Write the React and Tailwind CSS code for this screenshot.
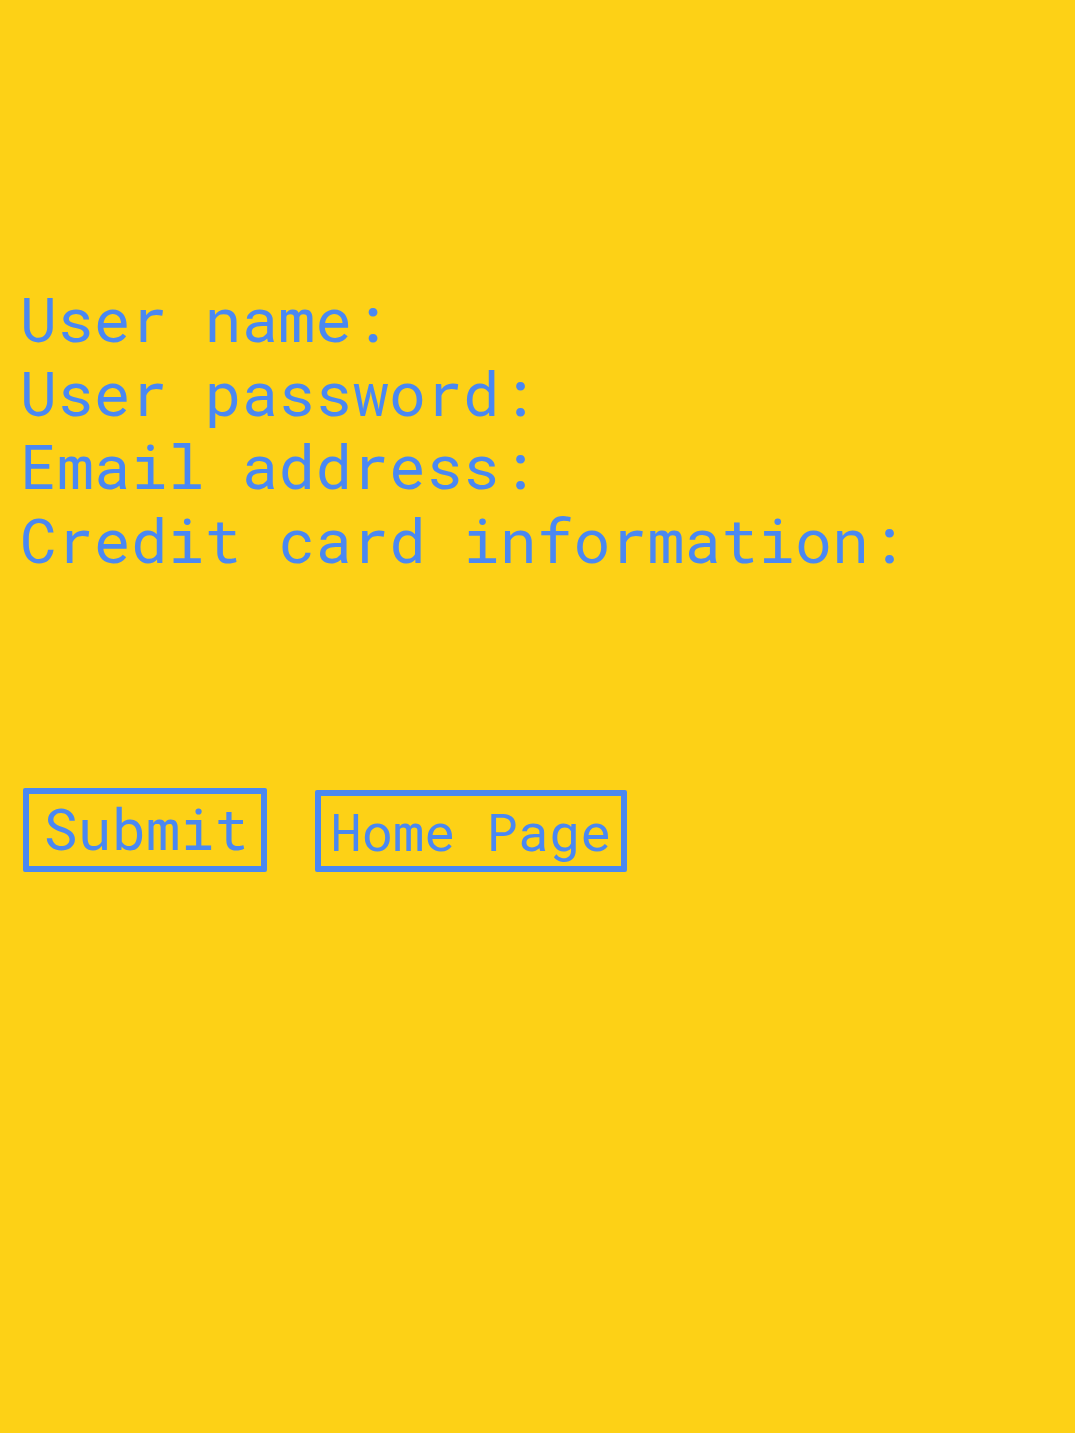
export default function App() {
  const labels = ['User name:', 'User password:', 'Email address:', 'Credit card information:']

  return (
    <div className="min-h-[1433px] w-full bg-[#fdd116] font-['Roboto_Mono','DejaVu_Sans_Mono',monospace] text-[#4a88f2]">
      <div className="pt-[282px] pl-[20px]">
        {labels.map((label) => (
          <div key={label} className="text-[61.5px] leading-[73.5px] whitespace-pre">{label}</div>
        ))}
      </div>
      <div className="mt-[212px] flex items-end gap-[48px] pl-[23px]">
        <button className="h-[84px] w-[244px] rounded-[2px] border-[6px] border-[#4a88f2] pb-[5px] pl-[2px] text-[57px] leading-none">
          Submit
        </button>
        <button className="h-[82px] w-[312px] rounded-[2px] border-[6px] border-[#4a88f2] text-[52px] leading-none">
          Home Page
        </button>
      </div>
    </div>
  )
}
